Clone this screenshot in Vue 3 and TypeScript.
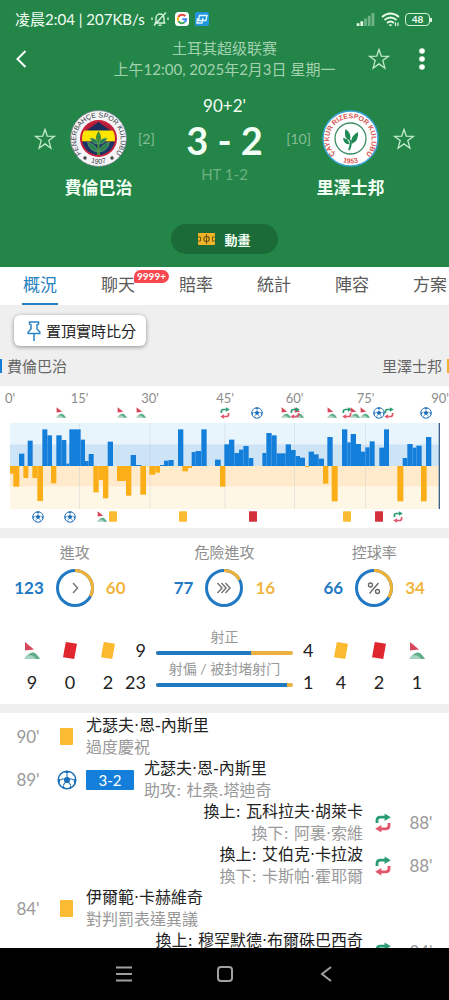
<script setup lang="ts">
import { ref } from 'vue'

type Kind = 'flag' | 'ball' | 'sub' | 'yellow' | 'red'
interface Marker { kind: Kind; x: number }
interface MatchEvent {
  minute: string
  kind: Kind
  side: 'home' | 'away'
  main: string
  note: string
  score?: string
}

const tabs = ['概況', '聊天', '賠率', '統計', '陣容', '方案']
const active = ref('概況')

// Width of the momentum chart in its own units
const W = 1290
const MID = 129
const ticks = [
  { label: "0'", x: 0 }, { label: "15'", x: 209 }, { label: "30'", x: 420 },
  { label: "45'", x: 645 }, { label: "60'", x: 854 }, { label: "75'", x: 1067 },
  { label: "90'", x: 1290 },
]
// Each bar: start, end, signed height (positive = home)
const bars: [number, number, number][] = [
  [0, 13, -23], [10, 28, -62], [27, 43, 37], [40, 55, -36], [53, 68, 76], [67, 82, -36],
  [82, 99, -105], [97, 112, 110], [112, 126, 92], [123, 139, -52], [139, 155, 92], [155, 169, 78],
  [169, 178, 7], [178, 212, 110], [212, 225, 79], [225, 236, 15], [236, 251, 36], [250, 266, -79],
  [266, 279, -42], [279, 295, -97], [293, 309, 73], [321, 348, -45], [348, 364, -89], [362, 378, 33],
  [378, 394, 3], [391, 408, -86], [418, 436, -26], [436, 450, -20], [450, 462, 3], [462, 476, 16],
  [476, 491, 18], [504, 520, 110], [517, 534, -16], [534, 546, -6], [545, 557, 42], [557, 574, 45],
  [574, 590, 110], [615, 632, 19], [630, 646, -62], [643, 657, 65], [657, 673, 79], [673, 687, 39],
  [687, 700, 49], [700, 716, 60], [716, 730, 24], [757, 769, 39], [769, 785, 99], [785, 800, 92],
  [800, 827, 38], [827, 843, 65], [843, 857, 48], [857, 870, 30], [870, 885, 25], [885, 898, -3],
  [896, 912, 43], [912, 926, 35], [926, 942, 22], [939, 955, -53], [952, 968, 87], [965, 983, -106],
  [996, 1012, 110], [1012, 1022, 71], [1022, 1038, 96], [1038, 1053, 66], [1053, 1066, 43],
  [1066, 1079, 56], [1079, 1094, 74], [1108, 1122, 55], [1122, 1137, 110], [1162, 1180, -106],
  [1178, 1192, 24], [1192, 1208, 66], [1208, 1219, 55], [1219, 1235, 61], [1233, 1250, -106],
  [1248, 1264, 87],
]
const homeMarks: Marker[] = [
  { kind: 'flag', x: 153 }, { kind: 'flag', x: 336 }, { kind: 'flag', x: 393 }, { kind: 'sub', x: 645 },
  { kind: 'ball', x: 742 }, { kind: 'flag', x: 827 }, { kind: 'flag', x: 866 }, { kind: 'sub', x: 855 },
  { kind: 'flag', x: 966 }, { kind: 'sub', x: 1010 }, { kind: 'flag', x: 1036 }, { kind: 'flag', x: 1064 },
  { kind: 'ball', x: 1107 }, { kind: 'sub', x: 1137 }, { kind: 'ball', x: 1248 },
]
const awayMarks: Marker[] = [
  { kind: 'ball', x: 84 }, { kind: 'ball', x: 181 }, { kind: 'flag', x: 277 }, { kind: 'yellow', x: 308 },
  { kind: 'yellow', x: 518 }, { kind: 'red', x: 729 }, { kind: 'yellow', x: 1010 }, { kind: 'red', x: 1107 },
  { kind: 'sub', x: 1164 },
]
const lanes = [homeMarks, awayMarks]
const pct = (x: number) => `${(x / W) * 100}%`

const rings = [
  { title: '進攻', home: 123, away: 60, symbol: 'single' },
  { title: '危險進攻', home: 77, away: 16, symbol: 'triple' },
  { title: '控球率', home: 66, away: 34, symbol: 'percent' },
]
const share = (a: number, b: number) => (100 * a) / (a + b)

const shots = [
  { title: '射正', home: 9, away: 4 },
  { title: '射偏 / 被封堵射门', home: 23, away: 1 },
]
const homeKinds: Kind[] = ['flag', 'red', 'yellow']
const awayKinds: Kind[] = ['yellow', 'red', 'flag']
const homeCounts = [9, 0, 2]
const awayCounts = [4, 2, 1]

const events: MatchEvent[] = [
  { minute: "90'", kind: 'yellow', side: 'home', main: '尤瑟夫·恩-內斯里', note: '過度慶祝' },
  { minute: "89'", kind: 'ball', side: 'home', main: '尤瑟夫·恩-內斯里', note: '助攻: 杜桑.塔迪奇', score: '3-2' },
  { minute: "88'", kind: 'sub', side: 'away', main: '換上: 瓦科拉夫·胡萊卡', note: '換下: 阿裏·索維' },
  { minute: "88'", kind: 'sub', side: 'away', main: '換上: 艾伯克·卡拉波', note: '換下: 卡斯帕·霍耶爾' },
  { minute: "84'", kind: 'yellow', side: 'home', main: '伊爾範·卡赫維奇', note: '對判罰表達異議' },
  { minute: "84'", kind: 'sub', side: 'away', main: '換上: 穆罕默德·布爾硃巴西奇', note: '' },
]
</script>

<template>
  <svg class="defs" aria-hidden="true">
    <symbol id="i-star" viewBox="0 0 22 22">
      <path d="M11 1.5 13.3 8.2 20.5 8.3 14.8 12.6 16.9 20.2 11 15.9 5.1 20.2 7.2 12.6 1.5 8.3 8.7 8.2Z" fill="none" stroke="currentColor" stroke-width="1.3" />
    </symbol>
    <symbol id="i-flag" viewBox="0 0 16 17">
      <path d="M0 17Q8 4 16 17Z" fill="#a5d3bf" />
      <path d="M4 13.500Q9 8 13 13L16 17H12Q9 12 4 13.500Z" fill="#5fae8a" />
      <path d="M1 0 10 7.4 1 8.4Z" fill="#d8485c" />
    </symbol>
    <symbol id="i-ball" viewBox="0 0 20 20">
      <circle cx="10" cy="10" r="8.8" fill="#fff" stroke="#1a6fb8" stroke-width="1.5" />
      <path d="M10 6.2 13.6 8.8 12.2 13H7.8L6.4 8.8ZM6.5 1.8 10 3.6 13.5 1.8 10 .8ZM1.3 8 3.4 9.8 2.8 13.6 1 11ZM18.7 8 16.6 9.8 17.2 13.6 19 11ZM5.2 17.2 6.2 15.4 8.6 18.8ZM14.8 17.2 13.8 15.4 11.4 18.8Z" fill="#1a6fb8" />
      <path d="M10 6.2V3.6M13.6 8.8 16.6 9.8M12.2 13 13.8 15.4M7.8 13 6.2 15.4M6.4 8.8 3.4 9.8" stroke="#1a6fb8" stroke-width="1.1" />
    </symbol>
    <symbol id="i-sub" viewBox="0 0 16 20">
      <path d="M2 10V7.500Q2 4.200 5.300 4.200H10" fill="none" stroke="#2a9c73" stroke-width="2.8" />
      <path d="M9.600 .4 15.800 4.200 9.600 8Z" fill="#2a9c73" />
      <path d="M14 10V12.500Q14 15.800 10.700 15.800H6" fill="none" stroke="#e2566b" stroke-width="2.8" />
      <path d="M6.400 12 .2 15.800 6.400 19.600Z" fill="#e2566b" />
    </symbol>
    <symbol id="i-yellow" viewBox="0 0 13 17"><rect width="13" height="17" rx="1" fill="#fbbc34" /></symbol>
    <symbol id="i-red" viewBox="0 0 13 17"><rect width="13" height="17" rx="1" fill="#d3303a" /></symbol>
    <symbol id="t-yellow" viewBox="0 0 14 17"><path d="M2.8 0 14 1.8 11.2 17 0 15.2Z" fill="#fbb92f" /></symbol>
    <symbol id="t-red" viewBox="0 0 14 17"><path d="M2.8 0 14 1.8 11.2 17 0 15.2Z" fill="#e0262e" /></symbol>
    <symbol id="t-flag" viewBox="0 0 16 17"><use href="#i-flag" width="16" height="17" /></symbol>
  </svg>

  <div class="app">
    <header class="hero">
      <div class="status">
        <span class="clock">凌晨2:04 | 207KB/s</span>
        <svg class="bell" viewBox="0 0 18 16" fill="none" stroke="#d5f3dc" stroke-width="1.4">
          <path d="M5 11.5V7a4 4 0 0 1 8 0v4.500M3.500 12h11M7.500 14.200h3M3 14.500 15 1.500M1 6.500v2.500M17 6.500v2.500" />
        </svg>
        <svg class="app-icon" viewBox="0 0 14 14">
          <rect width="14" height="14" rx="3.500" fill="#fff" />
          <g fill="none" stroke-width="2">
            <path d="M10.300 4.200A4.200 4.200 0 0 0 3.400 4.900" stroke="#e8453c" />
            <path d="M3.400 4.900A4.200 4.200 0 0 0 3.400 9.200" stroke="#f5b90f" />
            <path d="M3.400 9.200A4.200 4.200 0 0 0 9.600 10.300" stroke="#34a853" />
            <path d="M9.600 10.300A4 4 0 0 0 11.200 7.200H7.200" stroke="#4285f4" />
          </g>
        </svg>
        <svg class="app-icon" viewBox="0 0 14 14">
          <rect width="14" height="14" rx="2" fill="#2196dc" />
          <path d="M4.500 3.500H12L11 8.500H3.500Z" fill="none" stroke="#e6f6ff" stroke-width="1.300" />
          <path d="M2.500 6 2 11H7L8 6" fill="none" stroke="#e6f6ff" stroke-width="1.300" />
        </svg>
        <span class="grow"></span>
        <svg class="signal" viewBox="0 0 19 14">
          <path d="M0 14V11H3V14ZM4 14V9H7V14Z" fill="#e6fbe9" />
          <path d="M8 14V6H11V14ZM12 14V3H15V14ZM16 14V0H19V14Z" fill="#6fb588" />
        </svg>
        <svg class="wifi" viewBox="0 0 19 15" fill="none" stroke="#e6fbe9" stroke-width="1.800">
          <path d="M1 5Q9.500-2 18 5M3.500 8Q9.500 3 15.500 8M6 11Q9.500 8 13 11" />
          <path d="M7.500 12.500 9.500 14.500 11.500 12.500Z" fill="#e6fbe9" stroke="none" />
          <path d="M14.500 14V10.500M17 10.500V14" stroke-width="1.200" />
        </svg>
        <span class="battery">48</span>
      </div>

      <div class="title-bar">
        <button class="plain back" aria-label="返回">
          <svg viewBox="0 0 11 18"><path d="M9.500 1 1.500 9 9.500 17" fill="none" stroke="#fff" stroke-width="2" /></svg>
        </button>
        <h1 class="title">土耳其超级联赛<br />上午12:00, 2025年2月3日 星期一</h1>
        <div class="actions">
          <button class="plain star" aria-label="收藏比賽"><svg><use href="#i-star" /></svg></button>
          <button class="plain dots" aria-label="更多">
            <svg viewBox="0 0 6 22"><g fill="#fff"><circle cx="3" cy="3" r="2.800" /><circle cx="3" cy="11" r="2.800" /><circle cx="3" cy="19" r="2.800" /></g></svg>
          </button>
        </div>
      </div>

      <div class="match">
        <div class="team home">
          <button class="plain star" aria-label="收藏費倫巴治"><svg><use href="#i-star" /></svg></button>
          <svg class="crest" viewBox="0 0 57 57" role="img" aria-label="費倫巴治">
            <defs>
              <path id="fb-top" d="M11.500 44A22.300 22.300 0 1 1 45.500 44" />
              <path id="fb-bottom" d="M17 51A26 26 0 0 0 40 51" />
              <clipPath id="fb-clip"><circle cx="28.500" cy="28.500" r="16.500" /></clipPath>
            </defs>
            <circle cx="28.500" cy="28.500" r="28" fill="#f5f5f7" stroke="#6f7f86" stroke-width=".8" />
            <circle cx="28.500" cy="28.500" r="18.500" fill="#c8233e" />
            <g clip-path="url(#fb-clip)">
              <rect x="10" y="10" width="37" height="37" fill="#b41f39" />
              <path d="M16 21 28.500 12 41 21Z" fill="#1b2d5c" />
              <rect x="10" y="20.500" width="37" height="11" fill="#ffe500" />
              <path d="M12 31.500H45V33Q43 46 28.500 48 14 46 12 33Z" fill="#1c3464" />
            </g>
            <path d="M28.500 21Q33 27 29.500 33L30 45H27L27.500 33Q24 27 28.500 21Z" fill="#3f8c3c" />
            <path d="M28 42Q19 41 17.500 32 26 34 28 42ZM29 42Q38 41 39.500 32 31 34 29 42ZM28 34Q22 34 20 28 27 28 28 34ZM29 34Q35 34 37 28 30 28 29 34Z" fill="#27824f" stroke="#73a876" stroke-width=".6" />
            <text class="crest-text fb"><textPath href="#fb-top" startOffset="50%" text-anchor="middle">FENERBAHÇE SPOR KULÜBÜ</textPath></text>
            <text class="crest-text fb"><textPath href="#fb-bottom" startOffset="50%" text-anchor="middle">1907</textPath></text>
            <circle cx="15" cy="48" r="1.700" fill="#444" /><circle cx="42" cy="48" r="1.700" fill="#444" />
          </svg>
          <span class="rank">[2]</span>
          <strong class="name">費倫巴治</strong>
        </div>
        <div class="score-box">
          <span class="minute">90+2'</span>
          <strong class="score">3 - 2</strong>
          <span class="half">HT 1-2</span>
        </div>
        <div class="team away">
          <span class="rank">[10]</span>
          <svg class="crest" viewBox="0 0 57 57" role="img" aria-label="里澤士邦">
            <defs>
              <path id="rz-top" d="M13.500 44.500A21.200 21.200 0 1 1 43.500 44.500" />
              <path id="rz-bottom" d="M19 51.500A25 25 0 0 0 38 51.500" />
            </defs>
            <circle cx="28.500" cy="28.500" r="27.500" fill="#fff" stroke="#3aa3d5" stroke-width="1.500" />
            <circle cx="28.500" cy="28.500" r="15.500" fill="#fff" stroke="#3f8f68" stroke-width="1.300" />
            <path d="M27 40Q29.500 34 28.500 30" fill="none" stroke="#1f8a55" stroke-width="2" />
            <path d="M28 31Q21 28 23.500 19 30 23 28 31ZM29.500 34Q28 26 36 22 37 31 29.500 34ZM27.500 34Q22 35 21 28 26 28 27.500 34Z" fill="#1f8a55" />
            <text class="crest-text rz"><textPath href="#rz-top" startOffset="50%" text-anchor="middle">ÇAYKUR RİZESPOR KULÜBÜ</textPath></text>
            <text class="crest-text rz"><textPath href="#rz-bottom" startOffset="50%" text-anchor="middle">1953</textPath></text>
          </svg>
          <button class="plain star" aria-label="收藏里澤士邦"><svg><use href="#i-star" /></svg></button>
          <strong class="name">里澤士邦</strong>
        </div>
      </div>

      <button class="pill">
        <svg viewBox="0 0 17 12">
          <rect width="17" height="12" rx="1" fill="#f0b429" />
          <path d="M8.500 1V11M0 4H2.500V8H0M17 4H14.500V8H17" fill="none" stroke="#6f5a14" stroke-width="1" />
          <circle cx="8.500" cy="6" r="2.700" fill="none" stroke="#6f5a14" stroke-width="1.200" />
        </svg>
        動畫
      </button>
    </header>

    <nav class="tabs">
      <button v-for="t in tabs" :key="t" class="plain tab" :class="{ on: t === active }" @click="active = t">
        {{ t }}<span v-if="t === '聊天'" class="badge">9999+</span>
      </button>
    </nav>

    <main class="body">
      <div class="pin-row">
        <button class="pin">
          <svg viewBox="0 0 14 20" fill="none" stroke="#2a84c6" stroke-width="1.500">
            <path d="M2.500 1H11.500V3L10 4V8L12.800 11V12.500H1.200V11L4 8V4L2.500 3ZM7 12.500V20" />
          </svg>
          置頂實時比分
        </button>
      </div>
      <div class="legend"><span class="home">費倫巴治</span><span class="away">里澤士邦</span></div>

      <section class="momentum">
        <div class="ticks">
          <span v-for="t in ticks" :key="t.label" :style="{ left: pct(t.x) }">{{ t.label }}</span>
        </div>
        <div class="lane">
          <svg v-for="(m, i) in lanes[0]" :key="i" :class="m.kind" :style="{ left: pct(m.x) }"><use :href="'#i-' + m.kind" /></svg>
        </div>
        <svg class="chart" viewBox="0 0 1290 258" preserveAspectRatio="none">
          <rect width="1290" height="64" fill="#e9f5fd" />
          <rect y="64" width="1290" height="65" fill="#cde3f6" />
          <rect y="129" width="1290" height="62" fill="#ffebcb" />
          <rect y="191" width="1290" height="67" fill="#fff7e5" />
          <rect v-for="t in ticks.slice(1, 6)" :key="t.x" :x="t.x - 1" width="2" height="258" fill="#c9d3d8" fill-opacity=".7" />
          <rect
            v-for="(b, i) in bars" :key="i" :x="b[0]" :width="b[1] - b[0]"
            :y="b[2] > 0 ? MID - b[2] : MID" :height="Math.abs(b[2])"
            :fill="b[2] > 0 ? '#147fdb' : '#fbae17'"
          />
          <rect x="1286" width="4" height="258" fill="#3d6287" />
        </svg>
        <div class="lane">
          <svg v-for="(m, i) in lanes[1]" :key="i" :class="m.kind" :style="{ left: pct(m.x) }"><use :href="'#i-' + m.kind" /></svg>
        </div>
      </section>

      <section class="stats">
        <div class="rings">
          <div v-for="r in rings" :key="r.title" class="ring-cell">
            <h2>{{ r.title }}</h2>
            <div class="ring-row">
              <b class="num home">{{ r.home }}</b>
              <svg class="ring" viewBox="0 0 38 38" fill="none">
                <circle cx="19" cy="19" r="17.500" stroke="#2179c4" stroke-width="3" />
                <circle
                  cx="19" cy="19" r="17.500" stroke="#f2b233" stroke-width="3" pathLength="100"
                  :stroke-dasharray="`${share(r.away, r.home)} 100`" transform="rotate(-90 19 19)"
                />
                <path v-if="r.symbol === 'single'" d="M17 14 21.500 19 17 24" stroke="#777" stroke-width="1.500" />
                <path v-else-if="r.symbol === 'triple'" d="M12.500 14 17 19 12.500 24M16.500 14 21 19 16.500 24M20.500 14 25 19 20.500 24" stroke="#777" stroke-width="1.500" />
                <g v-else stroke="#666" stroke-width="1.300">
                  <circle cx="15.500" cy="16" r="2" /><circle cx="22.500" cy="22.500" r="2" /><path d="M23.500 14 14.500 24.500" />
                </g>
              </svg>
              <b class="num away">{{ r.away }}</b>
            </div>
          </div>
        </div>

        <div v-for="(s, row) in shots" :key="s.title" class="shot-row">
          <template v-for="(k, i) in homeKinds" :key="k">
            <span class="cell"><svg v-if="row === 0" :class="k"><use :href="'#t-' + k" /></svg><template v-else>{{ homeCounts[i] }}</template></span>
          </template>
          <span class="cell total right">{{ s.home }}</span>
          <div class="bar-box">
            <span class="bar-title">{{ s.title }}</span>
            <div class="bar"><i :style="{ width: share(s.home, s.away) + '%' }"></i></div>
          </div>
          <span class="cell total left">{{ s.away }}</span>
          <template v-for="(k, i) in awayKinds" :key="k">
            <span class="cell"><svg v-if="row === 0" :class="k"><use :href="'#t-' + k" /></svg><template v-else>{{ awayCounts[i] }}</template></span>
          </template>
        </div>
      </section>

      <ul class="events">
        <li v-for="(e, i) in events" :key="i" :class="e.side">
          <time>{{ e.minute }}</time>
          <span class="mark"><svg :class="e.kind"><use :href="'#i-' + e.kind" /></svg></span>
          <span v-if="e.score" class="goal">{{ e.score }}</span>
          <p><span>{{ e.main }}</span><small>{{ e.note }}</small></p>
        </li>
      </ul>
    </main>

    <footer class="sysnav">
      <button class="plain" aria-label="選單"><svg viewBox="0 0 16 16"><path d="M0 1.500H16M0 8H16M0 14.500H16" /></svg></button>
      <button class="plain" aria-label="主畫面"><svg viewBox="0 0 16 16"><rect x="1" y="1" width="14" height="14" rx="3" /></svg></button>
      <button class="plain" aria-label="返回"><svg viewBox="0 0 16 16"><path d="M13 1 4 8 13 15" /></svg></button>
    </footer>
  </div>
</template>

<style>
body { margin: 0; background: #fff; }
</style>

<style scoped>
.defs { position: absolute; width: 0; height: 0; }
.app {
  height: 100vh; display: flex; flex-direction: column; overflow: hidden;
  font-family: Lato, "Noto Sans CJK TC", "Noto Sans CJK SC", sans-serif; color: #222;
}
button { font-family: inherit; cursor: pointer; }
.plain { border: 0; padding: 0; background: none; color: inherit; }
svg { display: block; }
h1, h2, p, ul { margin: 0; padding: 0; font-weight: 400; }

.hero { flex: none; background: #238547; color: #f2fff4; padding-bottom: 13px; }
.status { display: flex; align-items: center; height: 38px; padding: 0 17px 0 15px; }
.clock { font-size: 15px; line-height: 20px; white-space: nowrap; margin-right: 6px; }
.bell { width: 18px; height: 16px; margin-right: 6px; }
.app-icon { width: 14px; height: 14px; margin-right: 6px; }
.grow { flex: 1; }
.signal { width: 19px; height: 13px; margin-right: 6px; }
.wifi { width: 19px; height: 15px; margin-right: 5px; }
.battery {
  position: relative; width: 23px; height: 11px; border: 1px solid #d5f3dc; border-radius: 4px;
  font-size: 10px; line-height: 11px; font-weight: 700; text-align: center; margin-right: 2px;
}
.battery::after { content: ""; position: absolute; right: -3px; top: 4px; width: 2px; height: 4px; background: #d5f3dc; }

.title-bar { display: grid; grid-template-columns: 1fr auto 1fr; align-items: center; padding: 0 24px 0 16px; }
.back { justify-self: start; }
.back svg { width: 11px; height: 18px; }
.title { font-size: 15px; line-height: 21px; text-align: center; color: #a2d2b0; margin-right: -8px; white-space: nowrap; }
.actions { display: flex; justify-content: flex-end; align-items: center; gap: 29px; }
.star { color: #c4ecce; }
.star svg { width: 22px; height: 22px; }
.dots svg { width: 6px; height: 22px; }

.match { display: flex; justify-content: space-between; padding: 16px 34px 0; }
.team { display: grid; grid-template-rows: 57px auto; align-items: center; margin-top: 14px; flex: 1 1 0; }
.team.home { grid-template-columns: 22px auto auto; justify-content: start; }
.team.away { grid-template-columns: auto auto 22px; justify-content: end; }
.crest { width: 57px; height: 57px; margin: 0 14px; }
.name { grid-column: 2; grid-row: 2; text-align: center; font-size: 17px; line-height: 24px; margin-top: 9px; font-weight: 700; }
.rank { font-size: 14px; color: #86bd98; }
.team.home .rank { margin-left: -3px; }
.team.away .rank { margin-right: -3px; }
.crest-text { font-family: "Liberation Sans", sans-serif; }
.fb { font-size: 7px; fill: #33363c; }
.rz { font-size: 7px; font-weight: 700; fill: #d8534f; }
.score-box { display: flex; flex-direction: column; align-items: center; white-space: nowrap; }
.minute { font-size: 17px; line-height: 20px; }
.score { font-size: 38px; line-height: 44px; margin-top: 2px; font-weight: 700; }
.half { font-size: 15px; line-height: 20px; margin-top: 2px; color: #6db083; }
.pill {
  display: flex; align-items: center; justify-content: center; gap: 9px; height: 30px; margin: 24px auto 0;
  padding: 0 27px; border: 0; border-radius: 15px; background: #1b6b39; color: #f2fff4; font-size: 13px; font-weight: 700;
}
.pill svg { width: 17px; height: 12px; }

.tabs { flex: none; display: flex; gap: 42px; height: 38px; padding-left: 22px; background: #fff; overflow: hidden; }
.tab {
  position: relative; flex: none; width: 36px; height: 38px; font-size: 17px; line-height: 36px; color: #5a5a5a;
  white-space: nowrap; border-bottom: 2px solid transparent;
}
.tab.on { color: #2581bd; border-bottom-color: #2581bd; }
.badge {
  position: absolute; left: 34px; top: 3px; height: 13px; padding: 0 3px; border-radius: 7px 7px 7px 2px;
  background: #f9484f; color: #fff; font-size: 10px; line-height: 13px; font-weight: 700;
}

.body { flex: 1; min-height: 0; overflow-y: auto; scrollbar-width: none; background: #efefef; }
.pin-row { padding: 10px 14px 0; }
.pin {
  display: flex; align-items: center; gap: 5px; height: 31px; padding: 0 10px 0 13px; border: 0; border-radius: 6px;
  background: #fff; box-shadow: 0 1px 4px rgba(0, 0, 0, .4); font-size: 15px; color: #222; white-space: nowrap;
}
.pin svg { width: 14px; height: 20px; }
.legend { display: flex; justify-content: space-between; padding: 10px 0; font-size: 15px; line-height: 20px; color: #666; }
.legend span { display: flex; align-items: center; gap: 5px; }
.legend .home::before, .legend .away::after { content: ""; width: 2px; height: 14px; background: #147fdb; }
.legend .away::after { background: #f2ae2e; }

.momentum { background: #fff; padding: 4px 9px 5px 10px; }
.ticks { position: relative; height: 16px; font-size: 13px; line-height: 16px; color: #8c8c8c; }
.ticks span, .lane svg { position: absolute; transform: translateX(-50%); }
.lane { position: relative; height: 12px; margin: 1px 0 4px; }
.chart + .lane { margin: 2px 0 0; }
.lane .flag { width: 10px; height: 11px; }
.lane .ball, .lane .sub { width: 12px; height: 12px; }
.lane .yellow, .lane .red { width: 8px; height: 11px; }
.chart { width: 100%; height: 86px; }

.stats { background: #fff; margin: 10px 0 9px; padding: 4px 0 11px; }
.rings { display: grid; grid-template-columns: repeat(3, 1fr); margin-bottom: 22px; }
.ring-cell h2 { font-size: 15px; line-height: 20px; text-align: center; color: #8e8e8e; }
.ring-row { display: grid; grid-template-columns: 1fr 38px 1fr; align-items: center; gap: 12px; margin-top: 7px; }
.ring { width: 38px; height: 38px; }
.num { font-size: 17px; line-height: 22px; }
.num.home { text-align: right; color: #2179c4; }
.num.away { color: #f0b63f; }
.shot-row {
  display: grid; grid-template-columns: 38px 38px 38px 19px 1fr 19px 38px 38px 38px; height: 32px; padding: 0 13px;
}
.cell { align-self: end; height: 22px; font-size: 18px; line-height: 22px; display: flex; justify-content: center; align-items: center; }
.cell.right { justify-content: flex-end; }
.cell.left { justify-content: flex-start; }
.cell svg { width: 14px; height: 17px; }
.cell .flag { width: 16px; }
.bar-box { margin: 0 10px; display: flex; flex-direction: column; }
.bar-title { font-size: 14px; line-height: 16px; text-align: center; color: #999; white-space: nowrap; }
.bar { height: 4px; margin-top: 6px; border-radius: 2px; background: #eab040; overflow: hidden; }
.bar i { display: block; height: 100%; background: #2179c0; }

.events { list-style: none; background: #fff; padding-top: 2px; }
.events li { display: flex; align-items: center; height: 43px; }
.events .away { flex-direction: row-reverse; }
.events time { width: 56px; text-align: center; font-size: 17px; color: #999; }
.mark { width: 21px; margin-right: 9px; display: flex; justify-content: center; }
.away .mark { margin: 0 0 0 10px; width: 20px; }
.mark .yellow { width: 13px; height: 17px; }
.mark .ball { width: 20px; height: 20px; }
.mark .sub { width: 16px; height: 20px; }
.goal { width: 48px; margin-right: 10px; background: #147fdb; color: #fff; font-size: 15px; line-height: 20px; text-align: center; border-radius: 1px; }
.events p {
  display: flex; flex-direction: column; font-size: 16px; white-space: nowrap;
  font-family: "DejaVu Sans", "Noto Sans CJK TC", sans-serif;
}
.away p { text-align: right; }
.events p span { line-height: 22px; color: #222; }
.events small { font-size: 16px; line-height: 21px; min-height: 21px; color: #999; }

.sysnav { flex: none; display: grid; grid-template-columns: repeat(3, 1fr); height: 52px; padding: 0 73px; background: #000; }
.sysnav button { display: flex; align-items: center; justify-content: center; }
.sysnav svg { width: 16px; height: 16px; fill: none; stroke: #a0a0a0; stroke-width: 2; }
</style>
